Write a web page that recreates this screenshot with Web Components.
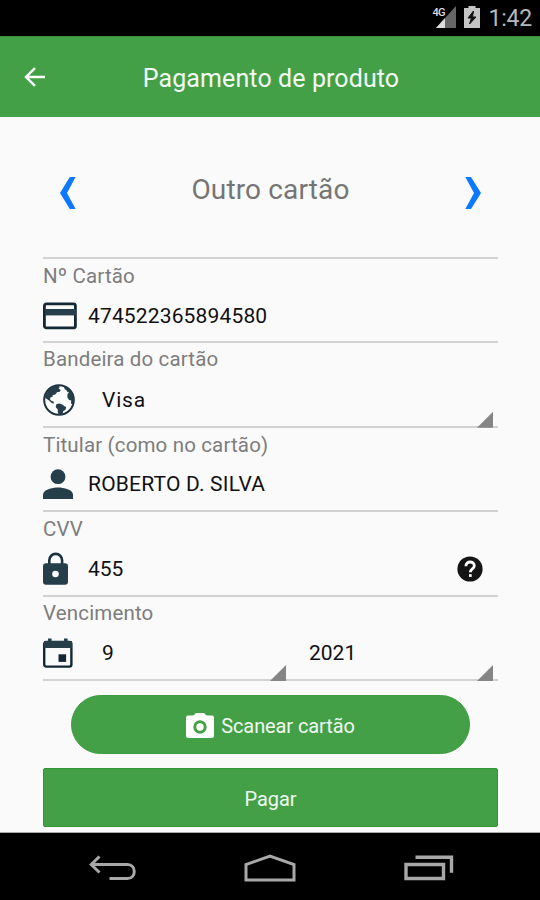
<!DOCTYPE html>
<html lang="pt-BR">
<head>
<meta charset="utf-8">
<title>Pagamento de produto</title>
<style>
  body {
    margin: 0;
    background: #fafafa;
    font-family: Roboto, "Liberation Sans", sans-serif;
  }
</style>
</head>
<body>
<payment-screen></payment-screen>

<script>
// creates the open shadow root and fills it
class BaseElement extends HTMLElement {
  constructor() {
    super();
    this.attachShadow({ mode: "open" });
  }
  connectedCallback() {
    this.shadowRoot.innerHTML = this.render();
  }
}

const icons = {
  back: [22, 20, `<path d="M11 1.2 2 10l9 8.8M2.4 10H21" fill="none" stroke="#fff" stroke-width="2.4"/>`],
  left: [16, 32, `<path d="M9.8 0H15.6L7 16l8.6 16H9.8L0 16z" fill="#0b79ff"/>`],
  right: [16, 32, `<path d="M6 0H.3L9 16 .3 32H6L16 16z" fill="#0b79ff"/>`],
  card: [35, 28, `<rect x="1.4" y="1.9" width="31" height="24" rx="2" fill="none" stroke="#142834" stroke-width="2.8"/><path d="M2 7h31v6.4H2z" fill="#263e4a"/>`],
  globe: [32, 32, `<circle cx="16" cy="16" r="14.8" fill="#fff" stroke="#1c323e" stroke-width="2"/>
    <g fill="#263e4a"><path d="M5.5 6.2Q9.5 2 15 1.4L16.800 3l-1.100 1.700 2.100 1.200-1.400 2-2 .1-2.200 2.600-2.600.7-.1 1.600-2.100.3-.3 2.400 1.700 1.500 1.800.3.4 2.200-1.900-.4-3-2.700L3 14.400 1.600 13z"/>
    <path d="M13.500 20l3.200-.6 3 1.300 2.100 1.800 1.500.3-.9 3.100-2.100 1.200-.9 3.600-3.600.3-1.100-3.300.1-2.200-2.200-2.600z"/>
    <path d="M20.200 2l3.500.5 4 4 2.800 5.500.5 4-1.500 5-1.500-1.700.2-2.800-2.200-.4-1.700-3.200.3-3.100 1.500-1-1.600-.7-1-1.900-1.500-.7z"/></g>`],
  person: [30, 30, `<circle cx="15" cy="7.700" r="7.400" fill="#263e4a"/><path d="M0 30v-4.200C0 21 9 18.600 15 18.600S30 21 30 25.800V30z" fill="#263e4a"/>`],
  lock: [26, 33, `<path d="M6.300 13V8.300a6.400 6.400 0 0 1 12.800 0V13" fill="none" stroke="#1c323e" stroke-width="2.600"/><rect y="11.300" width="25" height="21.500" rx="3" fill="#263e4a"/><circle cx="12.500" cy="22" r="3.300" fill="#fafafa"/>`],
  event: [30, 30, `<rect x="1.200" y="4" width="27.200" height="24.600" rx="2" fill="none" stroke="#142834" stroke-width="2.400"/><path d="M1 3h28v7H1zM5 .4h3.600V4H5zm16 0h3.600V4H21z" fill="#263e4a"/><path d="M15.500 16.300h7.600v7.600h-7.600z" fill="#142834"/>`],
  help: [26, 26, `<circle cx="13" cy="13" r="12.600" fill="#151515"/><path d="M8.900 10.200c0-5.600 8.400-5.400 8.400-.5 0 3.200-4 3.100-4 6.600" fill="none" stroke="#fff" stroke-width="2.800"/><path d="M12 18.200h2.700v2.700H12z" fill="#fff"/>`],
  camera: [28, 25, `<path d="M10 0h8l2.600 2.500H26a2 2 0 0 1 2 2V23a2 2 0 0 1-2 2H2a2 2 0 0 1-2-2V4.500a2 2 0 0 1 2-2h5.400z" fill="#fff"/><circle cx="14" cy="14" r="5.200" fill="none" stroke="#43a047" stroke-width="3"/>`],
  navBack: [47, 26, `<path d="M10.500 1.500 2.200 9.500l8.300 8M2.500 9.500H38.500c9 0 9 14 0 14H20.500" fill="none" stroke="#a8a8a8" stroke-width="3"/>`],
  navHome: [52, 28, `<path d="M2 26V10.600L26 2l24 8.600V26z" fill="none" stroke="#a8a8a8" stroke-width="3"/>`],
  navRecent: [50, 26, `<path d="M2 9.500h37.500v14H2zM11.500 2.300H47.500v15.500" fill="none" stroke="#a8a8a8" stroke-width="3.400"/>`],
  signal: [20, 22, `<path d="M0 22 20 0v22z" fill="#666"/><path d="M0 22 9 12v10z" fill="#ddd"/>`],
  battery: [16, 22, `<path d="M4.500 0h7v2H16v20H0V2h4.500z" fill="#c4c4c4"/><path d="M9.500 5 4 12h3.500L5.500 18l6.500-7H8.500z" fill="#111" stroke="#111"/>`]
};

class UiIcon extends BaseElement {
  render() {
    const [w, h, body] = icons[this.getAttribute("name")];
    return `
      <style>
        :host { display: block; flex: none; }
        svg { display: block; }
      </style>
      <svg width="${w}" height="${h}" viewBox="0 0 ${w} ${h}">${body}</svg>`;
  }
}
customElements.define("ui-icon", UiIcon);

class StatusBar extends BaseElement {
  render() {
    return `
      <style>
        :host {
          display: flex;
          justify-content: flex-end;
          height: 36px;
          box-sizing: border-box;
          padding: 6px 8px 0 0;
          background: #000;
          color: #b8b8b8;
        }
        .signal { position: relative; margin-right: 8px; }
        .net {
          position: absolute;
          left: -4px;
          top: 1px;
          font-size: 11px;
          font-weight: 500;
          line-height: 12px;
          letter-spacing: -0.7px;
          color: #ddd;
        }
        .time {
          margin-left: 8px;
          font-size: 23px;
          line-height: 26px;
          letter-spacing: -0.2px;
        }
      </style>
      <div class="signal"><ui-icon name="signal"></ui-icon><span class="net">4G</span></div>
      <ui-icon name="battery"></ui-icon>
      <span class="time">1:42</span>`;
  }
}
customElements.define("status-bar", StatusBar);

class AppBar extends BaseElement {
  render() {
    return `
      <style>
        :host {
          display: grid;
          grid-template-columns: 46px 1fr 46px;
          align-items: center;
          height: 81px;
          box-sizing: border-box;
          border-top: 1px solid #3a8d3e;
          background: #43a047;
          color: #f3faf3;
        }
        ui-icon { margin-left: 24px; }
        h1 {
          margin: 3px 0 0 2px;
          text-align: center;
          font-size: 25px;
          font-weight: 400;
          letter-spacing: 0.1px;
        }
      </style>
      <ui-icon name="back"></ui-icon>
      <h1><slot></slot></h1>`;
  }
}
customElements.define("app-bar", AppBar);

class CardPicker extends BaseElement {
  render() {
    return `
      <style>
        :host {
          display: flex;
          justify-content: space-between;
          align-items: center;
          height: 140px;
          box-sizing: border-box;
          padding: 10px 17px 0;
          border-bottom: 2px solid #d2d2d2;
          color: #757575;
        }
        span {
          margin-top: -6px;
          font-size: 28px;
          line-height: 34px;
          letter-spacing: 0.15px;
        }
      </style>
      <ui-icon name="left"></ui-icon>
      <span><slot></slot></span>
      <ui-icon name="right"></ui-icon>`;
  }
}
customElements.define("card-picker", CardPicker);

class FormField extends BaseElement {
  render() {
    return `
      <style>
        :host {
          display: flex;
          flex-direction: column;
          height: 84.4px;
          box-sizing: border-box;
          padding-top: 5px;
          border-bottom: 2px solid #d2d2d2;
          color: #111;
        }
        :host([tight]) { padding-top: 4px; }
        :host([tight]) .row { padding-top: 3px; }
        label {
          font-size: 20.5px;
          line-height: 24px;
          letter-spacing: 0.15px;
          color: #7d7d7d;
        }
        .row {
          flex: 1;
          display: grid;
          grid-template-columns: 45px 1fr auto;
          align-items: center;
          padding-top: 2px;
          font-size: 21px;
        }
      </style>
      <label>${this.getAttribute("label")}</label>
      <div class="row">
        <ui-icon name="${this.getAttribute("icon")}"></ui-icon>
        <slot></slot>
        <slot name="end"></slot>
      </div>`;
  }
}
customElements.define("form-field", FormField);

class SpinnerSelect extends BaseElement {
  render() {
    return `
      <style>
        :host {
          display: flex;
          align-items: center;
          position: relative;
          flex: 1;
          align-self: stretch;
          padding-left: 14px;
        }
        /* corner mark sits on the field's line */
        i {
          position: absolute;
          right: 5px;
          bottom: -2px;
          width: 16px;
          height: 16px;
          background: #858585;
          clip-path: polygon(100% 0, 100% 100%, 0 100%);
        }
      </style>
      <span><slot></slot></span><i></i>`;
  }
}
customElements.define("spinner-select", SpinnerSelect);

class GreenButton extends BaseElement {
  render() {
    return `
      <style>
        :host {
          display: flex;
          justify-content: center;
          align-items: center;
          gap: 7px;
          height: 59px;
          box-sizing: border-box;
          padding-top: 3px;
          border: 1px solid #2f9634;
          border-radius: 2px;
          background: #43a047;
          color: #f0f8f0;
          font-size: 20px;
          letter-spacing: -0.1px;
        }
        :host([pill]) {
          margin: 0 28px;
          border-color: #3c9e40;
          border-radius: 30px;
        }
      </style>
      <slot name="icon"></slot>
      <span><slot></slot></span>`;
  }
}
customElements.define("green-button", GreenButton);

class NavBar extends BaseElement {
  render() {
    return `
      <style>
        :host {
          display: flex;
          justify-content: space-between;
          align-items: center;
          height: 68px;
          box-sizing: border-box;
          padding: 3px 86px 0 89px;
          border-top: 1px solid #aaa;
          background: #000;
        }
      </style>
      <ui-icon name="navBack"></ui-icon>
      <ui-icon name="navHome"></ui-icon>
      <ui-icon name="navRecent"></ui-icon>`;
  }
}
customElements.define("nav-bar", NavBar);

class PaymentScreen extends BaseElement {
  render() {
    return `
      <style>
        :host {
          display: flex;
          flex-direction: column;
          width: 540px;
          height: 900px;
          overflow: hidden;
        }
        main {
          flex: 1;
          display: flex;
          flex-direction: column;
          padding: 2px 42px 0 43px;
        }
        .dates {
          display: flex;
          gap: 4px;
          align-self: stretch;
        }
        .help { margin-right: 15px; }
        .number { letter-spacing: 0.15px; }
        .name { letter-spacing: 0.2px; }
        .brand { letter-spacing: 0.8px; }
        .scan { margin-top: 14px; }
        .pay { margin-top: 14px; }
      </style>
      <status-bar></status-bar>
      <app-bar>Pagamento de produto</app-bar>
      <main>
        <card-picker>Outro cartão</card-picker>
        <form-field label="Nº Cartão" icon="card"><span class="number">474522365894580</span></form-field>
        <form-field tight label="Bandeira do cartão" icon="globe"><spinner-select class="brand">Visa</spinner-select></form-field>
        <form-field label="Titular (como no cartão)" icon="person"><span class="name">ROBERTO D. SILVA</span></form-field>
        <form-field label="CVV" icon="lock"><span>455</span><ui-icon class="help" slot="end" name="help"></ui-icon></form-field>
        <form-field tight label="Vencimento" icon="event">
          <div class="dates"><spinner-select>9</spinner-select><spinner-select>2021</spinner-select></div>
        </form-field>
        <green-button pill class="scan"><ui-icon slot="icon" name="camera"></ui-icon>Scanear cartão</green-button>
        <green-button class="pay">Pagar</green-button>
      </main>
      <nav-bar></nav-bar>`;
  }
}
customElements.define("payment-screen", PaymentScreen);
</script>
</body>
</html>
